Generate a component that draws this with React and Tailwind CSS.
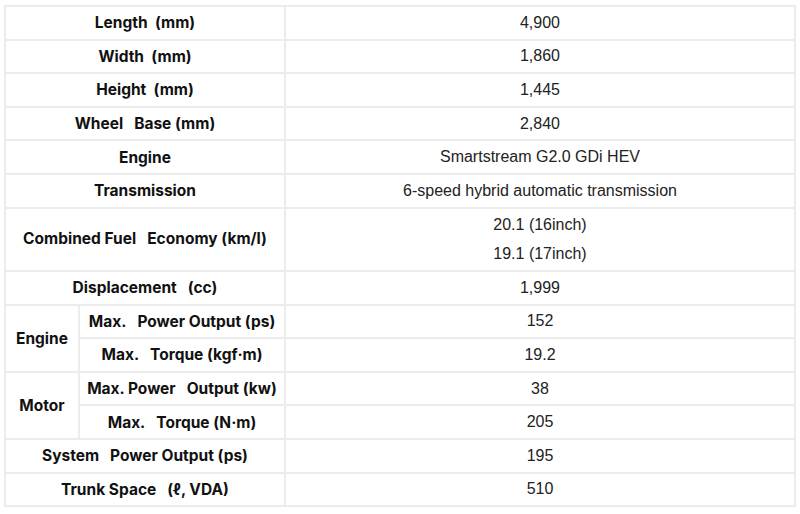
const rows = [
  { label: "Length\u00a0\u00a0(mm)", value: "4,900" },
  { label: "Width\u00a0\u00a0(mm)", value: "1,860" },
  { label: "Height\u00a0\u00a0(mm)", value: "1,445" },
  { label: "Wheel\u00a0\u00a0 Base (mm)", value: "2,840" },
  { label: "Engine", value: "Smartstream G2.0 GDi HEV" },
  { label: "Transmission", value: "6-speed hybrid automatic transmission" },
];

const Cell = ({ children, className = "", ...rest }) => (
  <td
    className={"border-2 border-[#ececec] text-center align-middle " + className}
    {...rest}
  >
    {children}
  </td>
);

const Label = ({ children, ...rest }) => (
  <Cell className="font-bold text-[15.5px] text-[#111] font-['Inter',sans-serif]" {...rest}>
    {children}
  </Cell>
);

const Value = ({ children }) => (
  <Cell className="text-[16px] text-[#222] font-['Liberation_Sans',Arial,sans-serif]">
    {children}
  </Cell>
);

export default function App() {
  return (
    <div className="w-[800px] h-[514px] bg-white pl-[4px] pr-[4px] pt-[5px]">
      <table className="w-[792px] table-fixed border-collapse">
        <colgroup>
          <col className="w-[74px]" />
          <col className="w-[206px]" />
          <col />
        </colgroup>
        <tbody>
          {rows.map((r) => (
            <tr key={r.value} className="h-[33.6px]">
              <Label colSpan={2}>{r.label}</Label>
              <Value>{r.value}</Value>
            </tr>
          ))}
          <tr className="h-[63px]">
            <Label colSpan={2}>Combined Fuel&nbsp;&nbsp; Economy (km/l)</Label>
            <Cell className="text-[16px] text-[#222] font-['Liberation_Sans',Arial,sans-serif] leading-[29px]">
              <div>20.1 (16inch)</div>
              <div>19.1 (17inch)</div>
            </Cell>
          </tr>
          <tr className="h-[34px]">
            <Label colSpan={2}>Displacement&nbsp;&nbsp; (cc)</Label>
            <Value>1,999</Value>
          </tr>
          <tr className="h-[33.6px]">
            <Label rowSpan={2}>Engine</Label>
            <Label>Max.&nbsp;&nbsp; Power Output (ps)</Label>
            <Value>152</Value>
          </tr>
          <tr className="h-[33.6px]">
            <Label>Max.&nbsp;&nbsp; Torque (kgf·m)</Label>
            <Value>19.2</Value>
          </tr>
          <tr className="h-[33.6px]">
            <Label rowSpan={2}>Motor</Label>
            <Label>Max. Power&nbsp;&nbsp; Output (kw)</Label>
            <Value>38</Value>
          </tr>
          <tr className="h-[33.6px]">
            <Label>Max.&nbsp;&nbsp; Torque (N·m)</Label>
            <Value>205</Value>
          </tr>
          <tr className="h-[33.6px]">
            <Label colSpan={2}>System&nbsp;&nbsp; Power Output (ps)</Label>
            <Value>195</Value>
          </tr>
          <tr className="h-[33.6px]">
            <Label colSpan={2}>Trunk Space&nbsp;&nbsp; (ℓ, VDA)</Label>
            <Value>510</Value>
          </tr>
        </tbody>
      </table>
    </div>
  );
}
